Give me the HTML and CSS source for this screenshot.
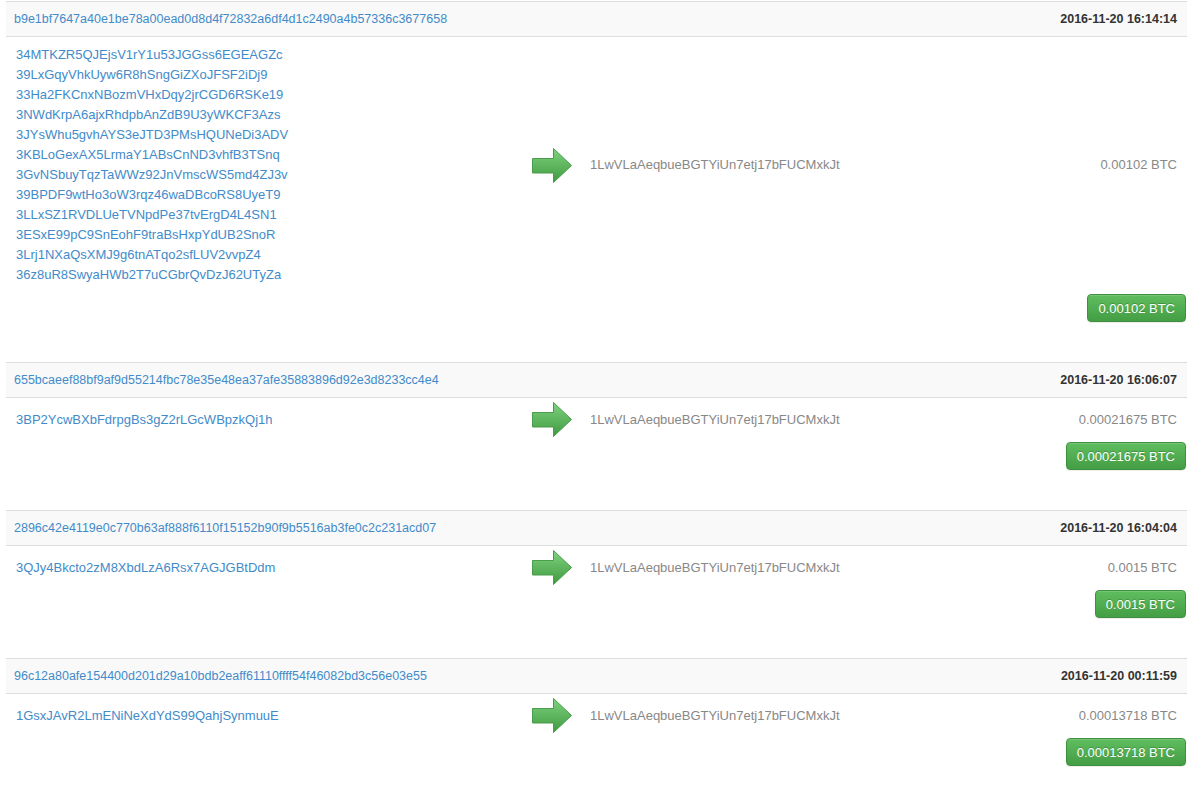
FILE: index.html
```
<html>
	<head>
		<title>Transactions</title>
		<link rel="stylesheet" href="styles.css">
	</head>
	<body>

<div class="tx">
	<div class="tx-head">
		<a href="#">b9e1bf7647a40e1be78a00ead0d8d4f72832a6df4d1c2490a4b57336c3677658</a>
		<b>2016-11-20 16:14:14</b>
	</div>
	<div class="tx-body">
		<div class="inputs">
			<a href="#">34MTKZR5QJEjsV1rY1u53JGGss6EGEAGZc</a>
			<a href="#">39LxGqyVhkUyw6R8hSngGiZXoJFSF2iDj9</a>
			<a href="#">33Ha2FKCnxNBozmVHxDqy2jrCGD6RSKe19</a>
			<a href="#">3NWdKrpA6ajxRhdpbAnZdB9U3yWKCF3Azs</a>
			<a href="#">3JYsWhu5gvhAYS3eJTD3PMsHQUNeDi3ADV</a>
			<a href="#">3KBLoGexAX5LrmaY1ABsCnND3vhfB3TSnq</a>
			<a href="#">3GvNSbuyTqzTaWWz92JnVmscWS5md4ZJ3v</a>
			<a href="#">39BPDF9wtHo3oW3rqz46waDBcoRS8UyeT9</a>
			<a href="#">3LLxSZ1RVDLUeTVNpdPe37tvErgD4L4SN1</a>
			<a href="#">3ESxE99pC9SnEohF9traBsHxpYdUB2SnoR</a>
			<a href="#">3Lrj1NXaQsXMJ9g6tnATqo2sfLUV2vvpZ4</a>
			<a href="#">36z8uR8SwyaHWb2T7uCGbrQvDzJ62UTyZa</a>
		</div>
		<div class="arrow"><svg width="40" height="35" viewBox="0 0 40 35"><use href="#arrow"/></svg></div>
		<div class="outputs"><span>1LwVLaAeqbueBGTYiUn7etj17bFUCMxkJt</span><span>0.00102 BTC</span></div>
	</div>
	<div class="tx-total"><button class="btn-total">0.00102 BTC</button></div>
</div>

<div class="tx">
	<div class="tx-head">
		<a href="#">655bcaeef88bf9af9d55214fbc78e35e48ea37afe35883896d92e3d8233cc4e4</a>
		<b>2016-11-20 16:06:07</b>
	</div>
	<div class="tx-body">
		<div class="inputs">
			<a href="#">3BP2YcwBXbFdrpgBs3gZ2rLGcWBpzkQj1h</a>
		</div>
		<div class="arrow"><svg width="40" height="35" viewBox="0 0 40 35"><use href="#arrow"/></svg></div>
		<div class="outputs"><span>1LwVLaAeqbueBGTYiUn7etj17bFUCMxkJt</span><span>0.00021675 BTC</span></div>
	</div>
	<div class="tx-total"><button class="btn-total">0.00021675 BTC</button></div>
</div>

<div class="tx">
	<div class="tx-head">
		<a href="#">2896c42e4119e0c770b63af888f6110f15152b90f9b5516ab3fe0c2c231acd07</a>
		<b>2016-11-20 16:04:04</b>
	</div>
	<div class="tx-body">
		<div class="inputs">
			<a href="#">3QJy4Bkcto2zM8XbdLzA6Rsx7AGJGBtDdm</a>
		</div>
		<div class="arrow"><svg width="40" height="35" viewBox="0 0 40 35"><use href="#arrow"/></svg></div>
		<div class="outputs"><span>1LwVLaAeqbueBGTYiUn7etj17bFUCMxkJt</span><span>0.0015 BTC</span></div>
	</div>
	<div class="tx-total"><button class="btn-total">0.0015 BTC</button></div>
</div>

<div class="tx">
	<div class="tx-head">
		<a href="#">96c12a80afe154400d201d29a10bdb2eaff61110ffff54f46082bd3c56e03e55</a>
		<b>2016-11-20 00:11:59</b>
	</div>
	<div class="tx-body">
		<div class="inputs">
			<a href="#">1GsxJAvR2LmENiNeXdYdS99QahjSynmuuE</a>
		</div>
		<div class="arrow"><svg width="40" height="35" viewBox="0 0 40 35"><use href="#arrow"/></svg></div>
		<div class="outputs"><span>1LwVLaAeqbueBGTYiUn7etj17bFUCMxkJt</span><span>0.00013718 BTC</span></div>
	</div>
	<div class="tx-total"><button class="btn-total">0.00013718 BTC</button></div>
</div>

<!-- shared arrow -->
<svg class="defs" width="0" height="0">
	<defs>
		<linearGradient id="arrow-green" x1="0" y1="0" x2="0" y2="1">
			<stop offset="0" stop-color="#7fd27f"/>
			<stop offset="1" stop-color="#3f9a3f"/>
		</linearGradient>
		<polygon id="arrow" points="0.5,10.5 21.5,10.5 21.5,0.5 39.5,17.5 21.5,34.5 21.5,25 0.5,25" fill="url(#arrow-green)" stroke="#4b9d4b" stroke-width="1"/>
	</defs>
</svg>

	</body>
</html>
```

FILE: styles.css
```
BODY {
	margin: 0;
	padding: 1px 0 0 6px;
	font-family: "Liberation Sans", Arial, sans-serif;
	font-size: 13px;
	color: #333;
	background: #fff;
	}
A { color: #428bca; text-decoration: none; }

.tx { margin-bottom: 40px; }
.tx-head {
	display: flex;
	justify-content: space-between;
	align-items: center;
	height: 34px;
	padding: 0 10px 0 8px;
	background-color: #f9f9f9;
	border-top: 1px solid #ddd;
	border-bottom: 1px solid #ddd;
	font-size: 12.5px;
	}
.tx-head B { color: #333; }

.tx-body {
	display: grid;
	grid-template-columns: 516px 58px 1fr;
	align-items: center;
	padding: 4px 10px 4px 10px;
	}
.inputs { padding: 4px 0; }
.inputs A {
	display: block;
	line-height: 20px;
	white-space: nowrap;
	}
.arrow { height: 35px; }
.arrow SVG { display: block; }
.outputs {
	display: flex;
	justify-content: space-between;
	color: #888;
	line-height: 20px;
	}

.tx-total {
	display: flex;
	justify-content: flex-end;
	padding: 1px 1px 0 0;
	}
.btn-total {
	height: 28px;
	padding: 0 10px;
	border: 1px solid #3e8f3e;
	border-radius: 4px;
	background-image: linear-gradient(#5fbd5f, #449e44);
	color: #fff;
	font-family: "Liberation Sans", Arial, sans-serif;
	font-size: 13px;
	text-shadow: 0 -1px 0 rgba(0,0,0,0.2);
	box-shadow: inset 0 1px 0 rgba(255,255,255,0.15), 0 1px 1px rgba(0,0,0,0.075);
	}
.defs { position: absolute; }
```
